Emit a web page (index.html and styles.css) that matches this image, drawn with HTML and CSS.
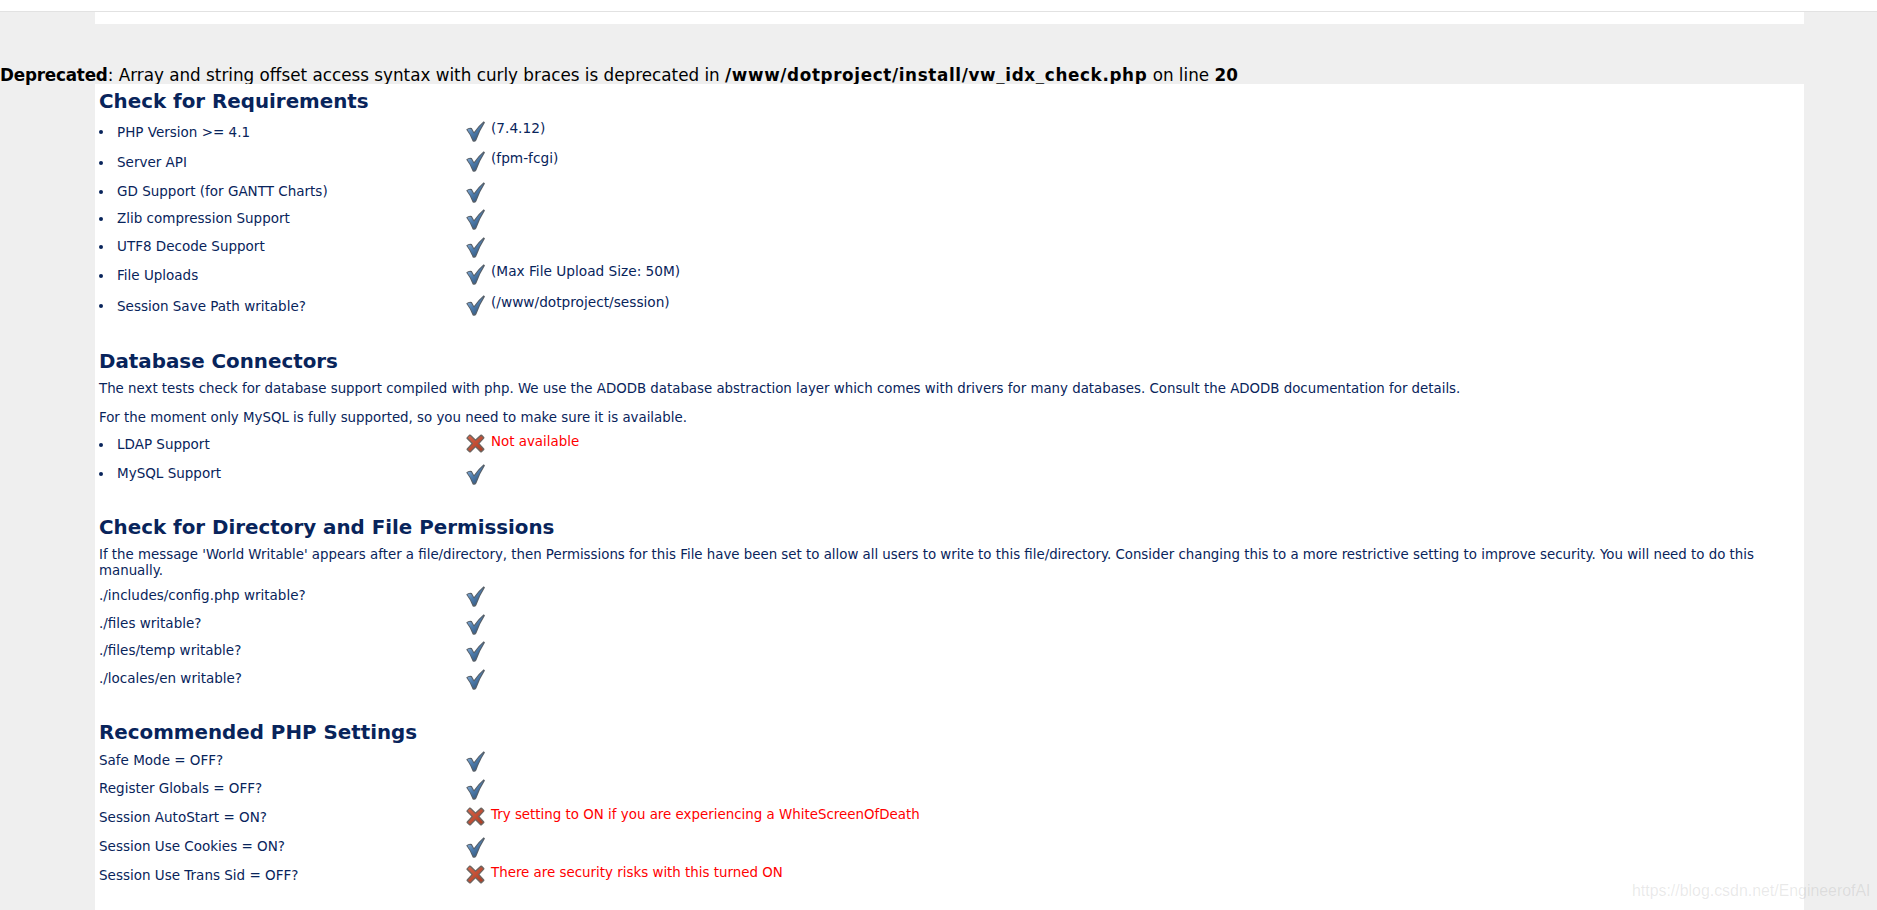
FILE: index.html
```html
<!DOCTYPE html>
<html lang="en">
<head>
<meta charset="utf-8">
<title>dotProject install check</title>
<link rel="stylesheet" href="styles.css">
</head>
<body>
<svg class="defs" width="0" height="0" aria-hidden="true">
  <defs>
    <linearGradient id="chk" x1="0.1" y1="0.1" x2="0.8" y2="1">
      <stop offset="0" stop-color="#8fb2d8"/>
      <stop offset="0.45" stop-color="#4f7eaf"/>
      <stop offset="1" stop-color="#2f5278"/>
    </linearGradient>
    <linearGradient id="crs" x1="0" y1="0" x2="1" y2="1">
      <stop offset="0" stop-color="#d8644a"/>
      <stop offset="1" stop-color="#ac3a20"/>
    </linearGradient>
    <symbol id="ok" viewBox="0 0 19 21">
      <path d="M0.2 8.4 Q3 6 5.8 7 L8 11 Q12 5 17.7 0.2 L19 1.4 Q14 9 10.4 19.2 Q8.8 21.6 6.6 20.2 Q4.2 13.4 0.2 8.4 Z" fill="#565f68"/>
      <path d="M1.4 8.7 Q3.6 7.2 5.2 8.2 L8 12.8 Q12.4 6.4 17.4 1.8 Q13 9.4 9.4 18.8 Q8.2 19.6 7.2 18.8 Q4.8 13 1.4 8.7 Z" fill="url(#chk)"/>
    </symbol>
    <symbol id="no" viewBox="0 0 19 19">
      <path d="M0.6 3.4 L3.4 0.6 Q4 0.2 4.8 0.8 L9.5 5.2 L14.4 0.8 Q15.2 0.2 16 0.8 L18.2 3 Q18.8 3.8 18.2 4.6 L13.6 9.4 L18.2 14.6 Q18.8 15.4 18.2 16 L15.8 18.3 Q15 18.9 14.2 18.2 L9.5 13.6 L4.8 18.2 Q4 18.9 3.2 18.3 L0.7 15.9 Q0.2 15.1 0.8 14.4 L5.4 9.4 L0.6 4.8 Q0.1 4 0.6 3.4 Z" fill="#6e6560"/>
      <path d="M1.8 3.8 L3.8 1.8 L9.5 7 L15.2 2 L17.2 4 L11.8 9.4 L17 15.2 L15 17 L9.5 11.8 L4 17.2 L2 15.2 L7.2 9.4 Z" fill="url(#crs)"/>
    </symbol>
  </defs>
</svg>
<div class="topbar"></div>
<div class="strip"></div>
<p class="notice"><b class="kw">Deprecated</b>: Array and string offset access syntax with curly braces is deprecated in <b class="path">/www/dotproject/install/vw_idx_check.php</b> on line <b>20</b></p>
<main class="panel">
  <section class="sec first">
    <h2>Check for Requirements</h2>
    <div class="row tall"><span class="lab bul">PHP Version &gt;= 4.1</span><svg class="ico"><use href="#ok"/></svg><span class="val">(7.4.12)</span></div>
    <div class="row tall"><span class="lab bul">Server API</span><svg class="ico"><use href="#ok"/></svg><span class="val">(fpm-fcgi)</span></div>
    <div class="row"><span class="lab bul">GD Support (for GANTT Charts)</span><svg class="ico"><use href="#ok"/></svg></div>
    <div class="row"><span class="lab bul">Zlib compression Support</span><svg class="ico"><use href="#ok"/></svg></div>
    <div class="row"><span class="lab bul">UTF8 Decode Support</span><svg class="ico"><use href="#ok"/></svg></div>
    <div class="row tall"><span class="lab bul">File Uploads</span><svg class="ico"><use href="#ok"/></svg><span class="val">(Max File Upload Size: 50M)</span></div>
    <div class="row tall"><span class="lab bul">Session Save Path writable?</span><svg class="ico"><use href="#ok"/></svg><span class="val">(/www/dotproject/session)</span></div>
  </section>
  <section class="sec">
    <h2>Database Connectors</h2>
    <p class="txt">The next tests check for database support compiled with php. We use the ADODB database abstraction layer which comes with drivers for many databases. Consult the ADODB documentation for details.</p>
    <p class="txt">For the moment only MySQL is fully supported, so you need to make sure it is available.</p>
    <div class="row tall"><span class="lab bul">LDAP Support</span><svg class="ico"><use href="#no"/></svg><span class="val err">Not available</span></div>
    <div class="row"><span class="lab bul">MySQL Support</span><svg class="ico"><use href="#ok"/></svg></div>
  </section>
  <section class="sec">
    <h2>Check for Directory and File Permissions</h2>
    <p class="txt">If the message 'World Writable' appears after a file/directory, then Permissions for this File have been set to allow all users to write to this file/directory. Consider changing this to a more restrictive setting to improve security. You will need to do this manually.</p>
    <div class="row"><span class="lab">./includes/config.php writable?</span><svg class="ico"><use href="#ok"/></svg></div>
    <div class="row"><span class="lab">./files writable?</span><svg class="ico"><use href="#ok"/></svg></div>
    <div class="row"><span class="lab">./files/temp writable?</span><svg class="ico"><use href="#ok"/></svg></div>
    <div class="row"><span class="lab">./locales/en writable?</span><svg class="ico"><use href="#ok"/></svg></div>
  </section>
  <section class="sec">
    <h2>Recommended PHP Settings</h2>
    <div class="row"><span class="lab">Safe Mode = OFF?</span><svg class="ico"><use href="#ok"/></svg></div>
    <div class="row"><span class="lab">Register Globals = OFF?</span><svg class="ico"><use href="#ok"/></svg></div>
    <div class="row tall"><span class="lab">Session AutoStart = ON?</span><svg class="ico"><use href="#no"/></svg><span class="val err">Try setting to ON if you are experiencing a WhiteScreenOfDeath</span></div>
    <div class="row"><span class="lab">Session Use Cookies = ON?</span><svg class="ico"><use href="#ok"/></svg></div>
    <div class="row tall"><span class="lab">Session Use Trans Sid = OFF?</span><svg class="ico"><use href="#no"/></svg><span class="val err">There are security risks with this turned ON</span></div>
  </section>
</main>
<div class="mark">https://blog.csdn.net/EngineerofAI</div>
</body>
</html>
```
FILE: styles.css
```css
html, body { margin: 0; padding: 0; height: 100%; overflow: hidden; }
body { background: #efefef; font-family: "DejaVu Sans", Verdana, sans-serif; color: #08245b; display: flex; flex-direction: column; }
.defs { position: absolute; }
.topbar { height: 11px; background: #fff; border-bottom: 1px solid #e2e2e2; flex: none; }
.strip { height: 12px; margin: 0 73px 0 95px; background: #fff; flex: none; }
.notice { margin: 0; padding-top: 40px; height: 20px; line-height: 22px; font-size: 16.8px; color: #000; white-space: nowrap; flex: none; }
.kw { letter-spacing: -0.2px; }
.path { letter-spacing: 0.64px; }
.panel { flex: 1; margin: 0 73px 0 95px; padding: 0 4px; background: #fff; }
.sec { padding-top: 28.7px; }
.sec.first { padding-top: 5.5px; }
h2 { margin: 0 0 2.6px; font-size: 19.85px; line-height: 24px; font-weight: bold; color: #08245b; }
.first h2 { margin-bottom: 3.3px; }
h2 + .txt { margin-top: 7px; }
.txt { margin: 0 0 13.4px; font-size: 13.35px; line-height: 16px; }
.txt:last-of-type { margin-bottom: 3px; }
.row { display: flex; align-items: flex-start; height: 27.5px; font-size: 13.5px; }
.row.tall { height: 30.5px; }
.lab { width: 367px; flex: none; line-height: 27.5px; }
.row.tall .lab { line-height: 30.5px; }
.bul { padding-left: 18px; width: 349px; position: relative; }
.bul::before { content: ""; position: absolute; left: 0; top: calc(50% - 2px); width: 4px; height: 4px; border-radius: 50%; background: #08245b; }
.ico { width: 19px; height: 21px; margin-top: 4px; flex: none; }
.val { margin-left: 6px; padding-top: 2px; line-height: 18px; font-size: 13.7px; }
.err { color: #f00; font-size: 13.4px; padding-top: 4px; }
.mark { position: absolute; left: 1632px; top: 882px; font: 15.9px "Liberation Sans", sans-serif; color: rgba(120,120,120,.16); }
```
